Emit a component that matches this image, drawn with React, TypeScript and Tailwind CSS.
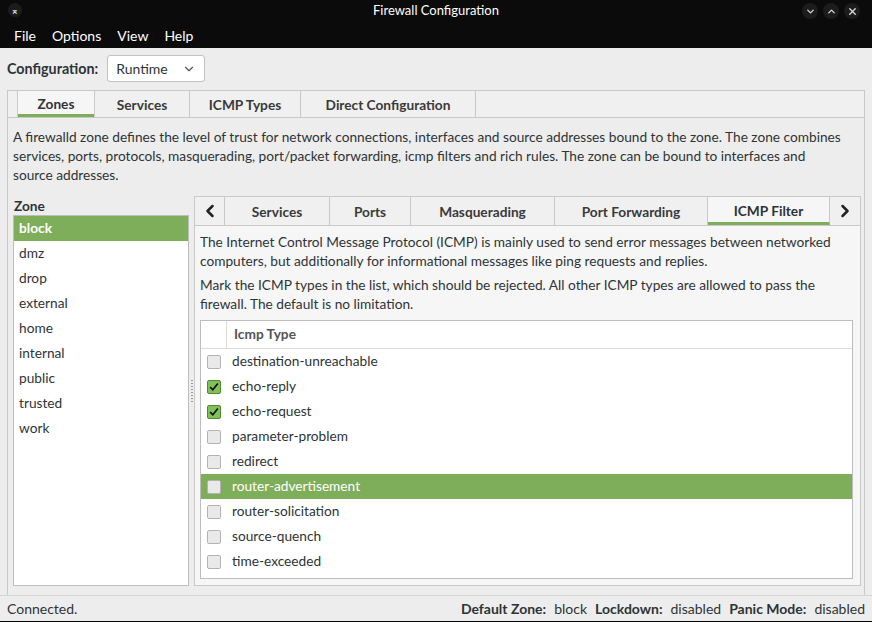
import { ChevronLeft, ChevronRight, ChevronDown, ChevronUp, X } from "lucide-react";

const zones = ["block", "dmz", "drop", "external", "home", "internal", "public", "trusted", "work"];

const icmpTypes = [
  { name: "destination-unreachable", checked: false },
  { name: "echo-reply", checked: true },
  { name: "echo-request", checked: true },
  { name: "parameter-problem", checked: false },
  { name: "redirect", checked: false },
  { name: "router-advertisement", checked: false, selected: true },
  { name: "router-solicitation", checked: false },
  { name: "source-quench", checked: false },
  { name: "time-exceeded", checked: false },
];

const zoneTabs = ["Services", "Ports", "Masquerading", "Port Forwarding", "ICMP Filter"];
const zoneTabWidths = ["w-[105px]", "w-[81px]", "w-[144px]", "w-[153px]", "w-[122px]"];

function TitleButton({ children }: { children: React.ReactNode }) {
  return (
    <span className="flex h-[16px] w-[16px] items-center justify-center rounded-full bg-[#1c1c1c] text-[#d6d6d6]">
      {children}
    </span>
  );
}

function Checkbox({ checked }: { checked: boolean }) {
  return (
    <span
      className={
        checked
          ? "flex h-[14px] w-[14px] items-center justify-center rounded-[2px] border border-[#4f8a2c] bg-[#7fc25a]"
          : "h-[14px] w-[14px] rounded-[2px] border border-[#b3b3b3] bg-[#e9e9e9]"
      }
    >
      {checked && (
        <svg viewBox="0 0 14 14" className="h-[12px] w-[12px]">
          <path d="M2.5 7.2 L5.6 10.2 L11.5 3" fill="none" stroke="#111" strokeWidth="2" />
        </svg>
      )}
    </span>
  );
}

export default function App() {
  return (
    <div className="flex h-[622px] w-[872px] flex-col bg-[#ededed] font-['Lato',sans-serif] text-[13.7px] text-[#2e3436]">
      {/* title bar */}
      <div className="relative flex h-[22px] items-center justify-center bg-[#0b0b0b] text-[13px] text-white">
        <span className="absolute left-[8px] top-[3px] flex h-[14px] w-[14px] items-center justify-center rounded-full bg-[#1c1c1c] text-[9px] font-bold leading-none text-[#ddd]">
          ⌅
        </span>
        Firewall Configuration
        <div className="absolute right-[12px] top-[3px] flex gap-[5px]">
          <TitleButton>
            <ChevronDown size={11} strokeWidth={3} />
          </TitleButton>
          <TitleButton>
            <ChevronUp size={11} strokeWidth={3} />
          </TitleButton>
          <TitleButton>
            <X size={11} strokeWidth={3} />
          </TitleButton>
        </div>
      </div>

      {/* menu bar */}
      <div className="flex h-[26px] items-center gap-[16px] bg-[#0b0b0b] px-[14px] text-[14px] text-white">
        <span>File</span>
        <span>Options</span>
        <span>View</span>
        <span>Help</span>
      </div>

      {/* configuration */}
      <div className="flex items-center gap-[9px] px-[7px] pt-[7px]">
        <span className="text-[14.3px] font-bold">Configuration:</span>
        <div className="flex h-[27px] w-[98px] items-center justify-between rounded-[3px] border border-[#c2c2c2] bg-white pl-[8px] pr-[8px] text-[14px]">
          <span>Runtime</span>
          <ChevronDown size={14} className="text-[#555]" />
        </div>
      </div>

      {/* main notebook */}
      <div className="mx-[7px] mt-[8px] flex min-h-0 flex-1 flex-col border-x border-t border-[#c9c9c9]">
        <div className="flex h-[27px] border-b border-[#c9c9c9] bg-[#f0f0f0] pl-[9px] font-bold text-[#3a3a3a]">
          <div className="flex w-[78px] items-center justify-center border-x border-[#c9c9c9] bg-[#f6f6f6] text-[#2e3436]">
            <span className="flex h-full w-full items-center justify-center border-b-[3px] border-[#7fae5b] pt-[4px]">Zones</span>
          </div>
          <div className="flex w-[95px] items-center justify-center border-r border-[#c9c9c9] pt-[2px]">Services</div>
          <div className="flex w-[111px] items-center justify-center border-r border-[#c9c9c9] pt-[2px]">ICMP Types</div>
          <div className="flex w-[175px] items-center justify-center border-r border-[#c9c9c9] pt-[2px]">Direct Configuration</div>
        </div>

        <div className="flex min-h-0 flex-1 flex-col bg-[#ededed]">
          <p className="pl-[5px] pr-[19px] pt-[9px] leading-[19px]">
            A firewalld zone defines the level of trust for network connections, interfaces and source addresses bound to the zone. The zone combines services, ports, protocols, masquerading, port/packet forwarding, icmp filters and rich rules. The zone can be bound to interfaces and source addresses.
          </p>

          <div className="mt-[12px] flex min-h-0 flex-1 pb-[9px] pl-[5px] pr-[3px]">
            {/* zone list */}
            <div className="flex w-[176px] flex-col">
              <div className="h-[19px] pl-[1px] font-bold leading-[19px]">Zone</div>
              <div className="flex-1 border border-[#bdbdbd] bg-white">
                {zones.map((z, i) => (
                  <div
                    key={z}
                    className={
                      i === 0
                        ? "flex h-[25px] items-center bg-[#7fae5b] pl-[5px] font-bold text-white"
                        : "flex h-[25px] items-center pl-[5px]"
                    }
                  >
                    {z}
                  </div>
                ))}
              </div>
            </div>

            {/* pane handle */}
            <div className="flex w-[5px] items-center justify-center">
              <div className="flex flex-col gap-[2px]">
                {Array.from({ length: 8 }).map((_, i) => (
                  <span key={i} className="h-px w-[2px] bg-[#9a9a9a]" />
                ))}
              </div>
            </div>

            {/* zone notebook */}
            <div className="flex flex-1 flex-col border border-[#c9c9c9] bg-[#f6f6f6]">
              <div className="flex h-[29px] border-b border-[#c9c9c9] bg-[#f0f0f0] font-bold text-[#3a3a3a]">
                <div className="flex w-[30px] items-center justify-center border-r border-[#c9c9c9]">
                  <ChevronLeft size={20} strokeWidth={3} className="text-[#222]" />
                </div>
                {zoneTabs.map((t, i) => (
                  <div
                    key={t}
                    className={`flex ${zoneTabWidths[i]} items-center justify-center border-r border-[#c9c9c9] pt-[2px] ${
                      t === "ICMP Filter" ? "border-b-[3px] border-b-[#7fae5b] bg-[#f6f6f6] pt-[4px] text-[#2e3436]" : ""
                    }`}
                  >
                    {t}
                  </div>
                ))}
                <div className="flex flex-1 items-center justify-center">
                  <ChevronRight size={20} strokeWidth={3} className="text-[#222]" />
                </div>
              </div>

              <div className="flex min-h-0 flex-1 flex-col px-[5px] pb-[6px] pt-[6px]">
                <p className="leading-[19px]">
                  The Internet Control Message Protocol (ICMP) is mainly used to send error messages between networked computers, but additionally for informational messages like ping requests and replies.
                </p>
                <p className="mt-[5px] leading-[19px]">
                  Mark the ICMP types in the list, which should be rejected. All other ICMP types are allowed to pass the firewall. The default is no limitation.
                </p>

                <div className="mr-[2px] mt-[7px] flex-1 border border-[#bdbdbd] bg-white">
                  <div className="flex h-[28px] border-b border-[#dcdcdc] font-bold text-[#555]">
                    <div className="w-[26px] border-r border-[#dcdcdc]" />
                    <div className="flex items-center pl-[7px]">Icmp Type</div>
                  </div>
                  {icmpTypes.map((t) => (
                    <div
                      key={t.name}
                      className={`flex h-[25px] items-center gap-[11px] pl-[6px] ${
                        t.selected ? "bg-[#7fae5b] text-white" : ""
                      }`}
                    >
                      <Checkbox checked={t.checked} />
                      <span>{t.name}</span>
                    </div>
                  ))}
                </div>
              </div>
            </div>
          </div>
        </div>
      </div>

      {/* status bar */}
      <div className="flex h-[26px] items-center justify-between border-t border-[#d4d4d4] bg-[#ededed] px-[7px] text-[14px]">
        <span>Connected.</span>
        <span className="flex gap-[8px]">
          <b>Default Zone:</b>
          <span>block</span>
          <b>Lockdown:</b>
          <span>disabled</span>
          <b>Panic Mode:</b>
          <span>disabled</span>
        </span>
      </div>
      <div className="h-px bg-black" />
    </div>
  );
}
